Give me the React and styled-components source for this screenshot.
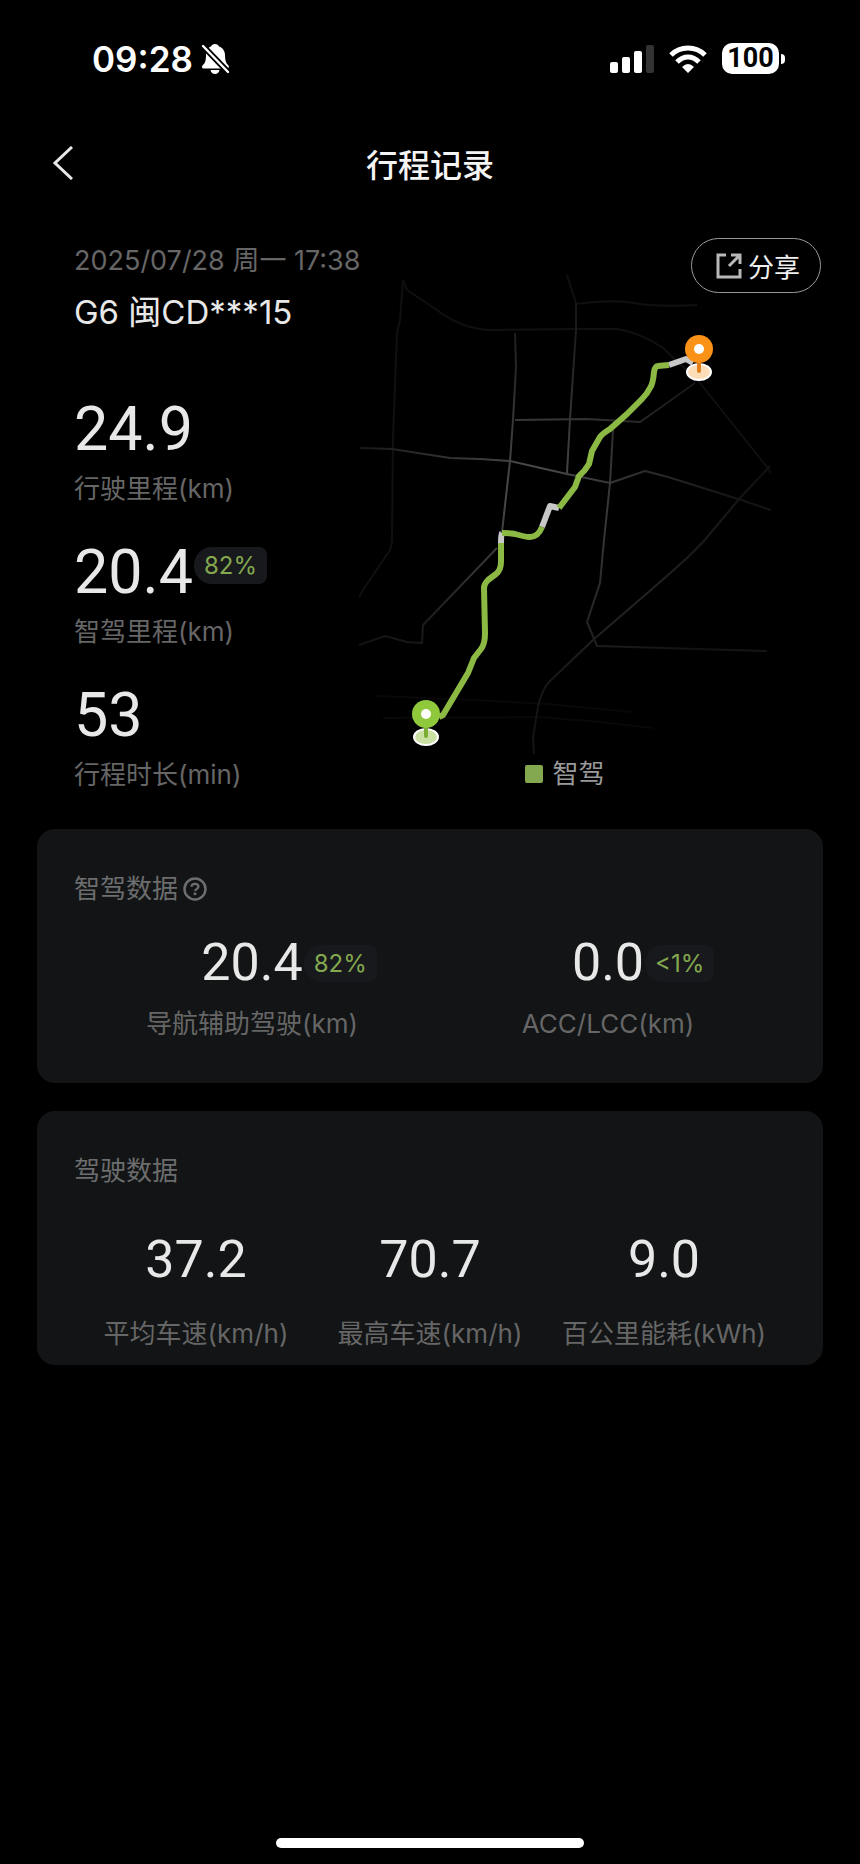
import React from 'react';
import styled, { createGlobalStyle } from 'styled-components';

const GlobalStyle = createGlobalStyle`
  body {
    margin: 0;
    background: #000;
    color: #e8e8e8;
    font-family: Inter, 'Noto Sans CJK SC', sans-serif;
  }

  * {
    box-sizing: border-box;
  }
`;

const Page = styled.div`
  display: flex;
  flex-direction: column;
  min-height: 100vh;
`;

const StatusBar = styled.header`
  display: flex;
  align-items: center;
  justify-content: space-between;
  height: 117px;
  padding: 0 75px 0 92px;
  color: #fff;
`;

const StatusGroup = styled.div`
  display: flex;
  align-items: center;
  gap: ${(props) => props.$gap}px;
`;

const Clock = styled.time`
  font-size: 35px;
  font-weight: 600;
  line-height: 44px;
`;

const Battery = styled.div`
  display: flex;
  align-items: center;
  gap: 2px;
  &::after {
    content: '';
    width: 4px;
    height: 10px;
    border-radius: 0 5px 5px 0;
    background: #fff;
  }
`;

const BatteryLevel = styled.span`
  width: 57px;
  border-radius: 10px;
  background: #fff;
  color: #000;
  font-family: Roboto, sans-serif;
  font-size: 27px;
  font-weight: 700;
  line-height: 31px;
  text-align: center;
`;

const NavBar = styled.nav`
  display: grid;
  grid-template-columns: 100px 1fr 100px;
  align-items: center;
  height: 96px;
`;

const BackButton = styled.button`
  display: flex;
  padding: 0 0 4px 51px;
  border: 0;
  background: none;
  color: #e8e8e8;
`;

const Title = styled.h1`
  margin: 0;
  padding-top: 2px;
  color: #f4f4f4;
  font-size: 32px;
  font-weight: 500;
  line-height: 40px;
  text-align: center;
`;

const Trip = styled.section`
  position: relative;
  display: grid;
  grid-template-columns: 285px minmax(0, 1fr);
  padding: 30px 89px 36px 74px;
`;

const TripDate = styled.div`
  color: #666;
  font-size: 27px;
  line-height: 36px;
  white-space: nowrap;
`;

const Plate = styled.div`
  margin: 13px 0 65px;
  font-size: 33px;
  line-height: 40px;
`;

const TripStats = styled.div`
  display: grid;
  gap: 33px;
`;

const Stat = styled.div`
  display: grid;
  gap: ${(props) => props.$gap || 10}px;
  justify-items: ${(props) => (props.$centered ? 'center' : 'start')};
`;

const StatValue = styled.div`
  position: relative;
  font-family: Roboto, sans-serif;
  font-size: ${(props) => (props.$small ? 52 : 61)}px;
  line-height: ${(props) => (props.$small ? 60 : 64)}px;
`;

const StatLabel = styled.div`
  color: #666;
  font-size: 26px;
  line-height: 36px;
  white-space: nowrap;
`;

const Badge = styled.span`
  position: absolute;
  top: ${(props) => (props.$small ? 12 : 7)}px;
  left: 100%;
  margin-left: 1px;
  padding: 0 10px;
  border-radius: 18px 8px 8px 18px;
  background: #17191c;
  color: #84a84f;
  font-family: Inter, sans-serif;
  font-size: 24px;
  line-height: 37px;
  white-space: nowrap;
`;

const ShareButton = styled.button`
  position: absolute;
  top: 25px;
  right: 39px;
  display: flex;
  align-items: center;
  gap: 6px;
  height: 55px;
  padding: 0 20px 0 24px;
  border: 1px solid #9a9a9a;
  border-radius: 28px;
  background: none;
  color: #f0f0f0;
  font-family: inherit;
  font-size: 26px;
`;

const MapColumn = styled.div`
  padding-top: 7px;
`;

const MapSvg = styled.svg`
  display: block;
  width: 100%;
`;

const Legend = styled.div`
  display: flex;
  align-items: center;
  justify-content: center;
  gap: 9px;
  color: #999;
  font-size: 26px;
  line-height: 38px;
  &::before {
    content: '';
    width: 18px;
    height: 18px;
    border-radius: 2px;
    background: #84a84f;
  }
`;

const Card = styled.section`
  min-height: 254px;
  margin: 0 37px 28px;
  padding: 42px 37px 13px;
  border-radius: 18px;
  background: #121415;
`;

const CardTitle = styled.h2`
  display: flex;
  align-items: center;
  gap: 5px;
  margin: 0;
  color: #6c6d6e;
  font-size: 26px;
  font-weight: 400;
  line-height: 36px;
`;

const HelpButton = styled.button`
  display: flex;
  padding: 0;
  border: 0;
  background: none;
  color: #6c6d6e;
`;

const CardStats = styled.div`
  display: grid;
  grid-template-columns: repeat(${(props) => props.$columns}, 1fr);
  margin-top: ${(props) => props.$top}px;
  padding: 0 ${(props) => (props.$columns > 2 ? 5 : 0)}px;
`;

const HomeIndicator = styled.div`
  width: 308px;
  height: 10px;
  margin: auto auto 16px;
  border-radius: 5px;
  background: #fff;
`;

const roads = [
  'M1 198L33 199L91 208L121 209L151 211L208 224L251 233L286 221L309 227L379 249L412 260',
  'M156 83L157 117L154 170L151 211L143 282',
  'M217 53L217 80L211 169L208 223',
  'M156 170L228 169L281 172L301 158L336 133',
  'M254 180L251 233L245 290L241 333L228 372L238 396L408 401',
  'M411 216L381 248L344 292L328 308L308 326L234 390L189 433Q182 442 179 457L174 487L175 504',
  'M138 298L64 375L63 393L48 392L26 386L0 395',
];

const outerRoads = [
  'M208 25L217 53',
  'M217 54Q254 49 275 53T338 55',
  'M44 30L48 40L78 60Q104 80 134 80L214 79L258 79Q280 82 304 98L341 133L408 217L412 223',
  'M44 30L41 70L38 83L34 187L33 288Q33 298 29 303L6 337L0 347',
];

const faintRoads = [
  'M18 446L114 450L188 454L274 462',
  'M24 468L181 467L241 472L294 478',
];

const autoRoute = [
  'M310 115L299 116Q296 116 295 122Q294 134 291 138Q288 144 283 149L268 164L251 179Q243 184 241 187L233 201L230 214Q226 221 220 226L216 237L200 258',
  'M183 277Q179 287 171 287Q166 287 156 284Q150 283 143 283',
  'M142 293L142 312Q142 320 137 324L129 330Q125 334 125 338L126 383Q126 394 122 399L115 408L109 423L84 465L80 467',
];

const manualRoute = [
  'M334 113L327 109L310 115',
  'M200 258L191 256L183 277',
  'M143 283Q142 284 142 293',
];

function Pin({ x, y, color, stem, base }) {
  return (
    <g transform={`translate(${x} ${y})`}>
      <ellipse cy="23" rx="12" ry="8" fill={base} stroke="#fff" strokeWidth="2" />
      <path d="M0 12V22" stroke={stem} strokeWidth="4" strokeLinecap="round" />
      <circle r="14" fill={color} />
      <circle r="5" fill="#fff" />
    </g>
  );
}

function RouteMap() {
  return (
    <MapSvg viewBox="0 0 412 505" fill="none" role="img" aria-label="行程路线">
      <defs>
        <radialGradient id="roadFade" gradientUnits="userSpaceOnUse" cx="175" cy="245" r="250">
          <stop offset="0" stopColor="#505050" />
          <stop offset="0.35" stopColor="#333" />
          <stop offset="0.7" stopColor="#1a1a1a" />
          <stop offset="0.9" stopColor="#121212" />
          <stop offset="1" stopColor="#141414" />
        </radialGradient>
      </defs>
      <g strokeWidth="2" strokeLinejoin="round">
        {faintRoads.map((d) => (
          <path key={d} d={d} stroke="#080808" />
        ))}
        {outerRoads.map((d) => (
          <path key={d} d={d} stroke="#101010" />
        ))}
        {roads.map((d) => (
          <path key={d} d={d} stroke="url(#roadFade)" />
        ))}
      </g>
      <g strokeWidth="6" strokeLinejoin="round">
        {manualRoute.map((d) => (
          <path key={d} d={d} stroke="#c8c8c8" />
        ))}
        {autoRoute.map((d) => (
          <path key={d} d={d} stroke="#8bb944" />
        ))}
      </g>
      <Pin x={340} y={99} color="#fb9218" stem="#e0801a" base="#fddcb8" />
      <Pin x={67} y={464} color="#90c83c" stem="#7cae36" base="#c9e0a2" />
    </MapSvg>
  );
}

function BellOffIcon() {
  return (
    <svg width="29" height="32" viewBox="0 0 29 32" aria-hidden="true">
      <path
        fill="#fff"
        d="M14 1c2 0 3.500 1 4 2.600 4 1.400 6 4.800 6 8.900 0 5 1 7.500 3 9.500 1.500 1.500 1 3.500-1 3.500H3c-2.200 0-2.700-2-1-3.500 2-2 3-4.500 3-9.500 0-4.100 1-7.500 5-8.900C10.500 2 12 1 14 1z"
      />
      <path fill="#fff" d="M9.500 27h9c-.5 2.500-2.200 4-4.500 4s-4-1.500-4.500-4z" />
      <path stroke="#000" strokeWidth="6" d="M0 1L29 31" />
      <path stroke="#fff" strokeWidth="2.400" strokeLinecap="round" d="M2 3L27 29" />
    </svg>
  );
}

function SignalIcon() {
  return (
    <svg width="44" height="28" viewBox="0 0 44 28" fill="#fff" aria-hidden="true">
      <rect y="17" width="8" height="11" rx="2" />
      <rect x="12" y="12" width="8" height="16" rx="2" />
      <rect x="24" y="6" width="8" height="22" rx="2" />
      <rect x="36" width="8" height="28" rx="2" fill="#333" />
    </svg>
  );
}

function WifiIcon() {
  return (
    <svg width="38" height="28" viewBox="0 0 38 28" fill="none" stroke="#fff" aria-hidden="true">
      <path strokeWidth="5" d="M2 10Q9 3 19 3T36 10" />
      <path strokeWidth="5" d="M8 17Q13 12 19 12T30 17" />
      <path fill="#fff" stroke="none" d="M19 28L13 22Q16 19 19 19T25 22z" />
    </svg>
  );
}

function StatItem({ value, label, badge, small, centered, gap }) {
  return (
    <Stat $centered={centered} $gap={gap}>
      <StatValue $small={small}>
        {value}
        {badge && <Badge $small={small}>{badge}</Badge>}
      </StatValue>
      <StatLabel>{label}</StatLabel>
    </Stat>
  );
}

export default function App() {
  return (
    <Page>
      <GlobalStyle />
      <StatusBar>
        <StatusGroup $gap={8}>
          <Clock>09:28</Clock>
          <BellOffIcon />
        </StatusGroup>
        <StatusGroup $gap={15}>
          <SignalIcon />
          <WifiIcon />
          <Battery>
            <BatteryLevel>100</BatteryLevel>
          </Battery>
        </StatusGroup>
      </StatusBar>

      <NavBar>
        <BackButton type="button" aria-label="返回">
          <svg width="22" height="34" viewBox="0 0 22 34" fill="none">
            <path d="M21 1L4 17L21 33" stroke="currentColor" strokeWidth="3" />
          </svg>
        </BackButton>
        <Title>行程记录</Title>
      </NavBar>

      <Trip>
        <div>
          <TripDate>2025/07/28 周一 17:38</TripDate>
          <Plate>G6 闽CD***15</Plate>
          <TripStats>
            <StatItem value="24.9" label="行驶里程(km)" />
            <StatItem value="20.4" label="智驾里程(km)" badge="82%" />
            <StatItem value="53" label="行程时长(min)" />
          </TripStats>
        </div>
        <MapColumn>
          <RouteMap />
          <Legend>智驾</Legend>
        </MapColumn>
        <ShareButton type="button">
          <svg width="26" height="26" viewBox="0 0 26 26" fill="none" stroke="#b8b8b8" strokeWidth="3">
            <path d="M10 2H2V24H24V16" />
            <path d="M15 2H24V11M24 2L13 13" />
          </svg>
          分享
        </ShareButton>
      </Trip>

      <Card>
        <CardTitle>
          智驾数据
          <HelpButton type="button" aria-label="智驾数据说明">
            <svg width="24" height="24" viewBox="0 0 24 24" fill="none" stroke="currentColor">
              <circle cx="12" cy="12" r="10.500" strokeWidth="2.500" />
              <path d="M8.500 9.800C8.500 7.800 10 6.800 12 6.800s3.500 1 3.500 2.800c0 2.200-3.400 2.200-3.400 4.400" strokeWidth="2.200" />
              <circle cx="12" cy="16.800" r="1.500" fill="currentColor" stroke="none" />
            </svg>
          </HelpButton>
        </CardTitle>
        <CardStats $columns={2} $top={26}>
          <StatItem small centered gap={13} value="20.4" label="导航辅助驾驶(km)" badge="82%" />
          <StatItem small centered gap={13} value="0.0" label="ACC/LCC(km)" badge="<1%" />
        </CardStats>
      </Card>

      <Card>
        <CardTitle>驾驶数据</CardTitle>
        <CardStats $columns={3} $top={41}>
          <StatItem small centered gap={26} value="37.2" label="平均车速(km/h)" />
          <StatItem small centered gap={26} value="70.7" label="最高车速(km/h)" />
          <StatItem small centered gap={26} value="9.0" label="百公里能耗(kWh)" />
        </CardStats>
      </Card>

      <HomeIndicator />
    </Page>
  );
}
